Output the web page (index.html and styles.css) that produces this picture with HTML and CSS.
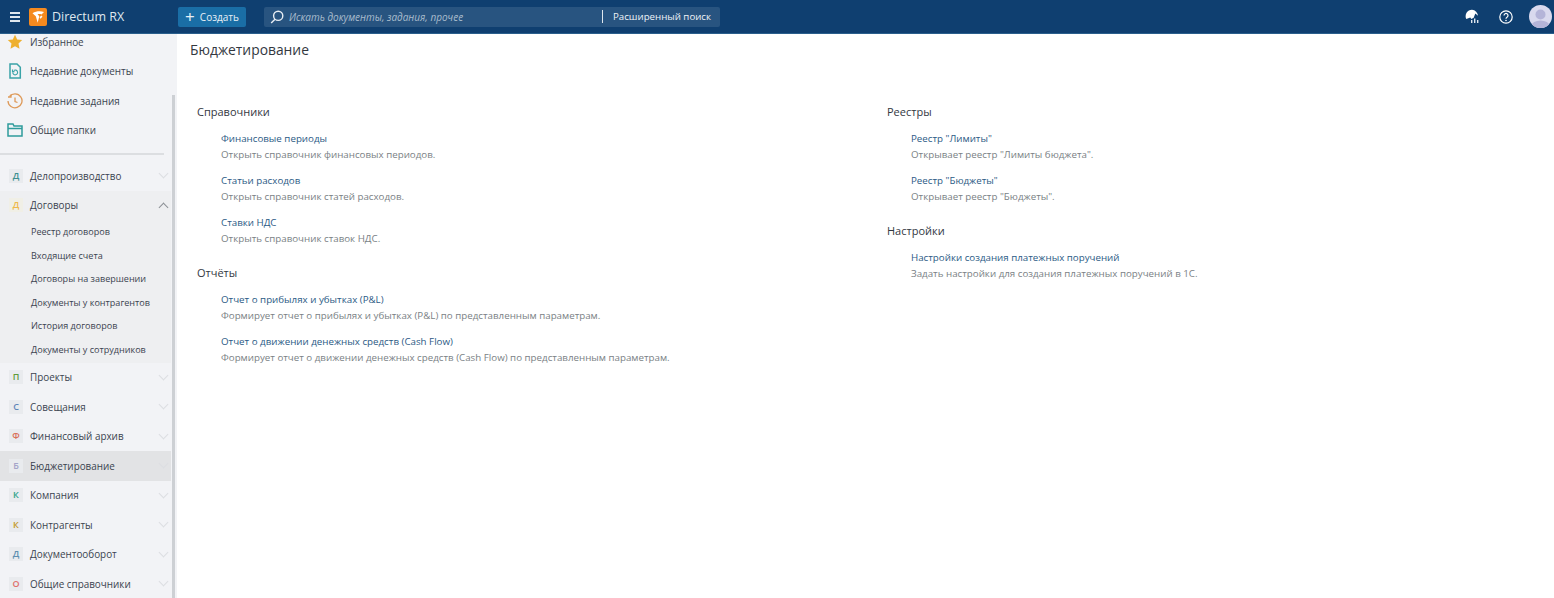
FILE: index.html
```html
<!DOCTYPE html>
<html lang="en">
<head>
  <meta charset="UTF-8" />
  <title>Directum RX</title>
  <link rel="stylesheet" href="styles.css">
</head>
<body>
  <header class="topbar">
    <div class="burger"><span></span><span></span><span></span></div>
    <svg class="logo" width="18" height="18" viewBox="0 0 18 18">
      <rect width="18" height="18" rx="2" fill="#f58a1f"/>
      <path d="M3.500 5.200C7 3.200 11.200 2.800 15 4l-2.500 2.400c-1.300-.5-2.700-.5-4-.1l1.800 2L8.700 14.800 6.800 8.300z" fill="#fff"/>
      <path d="M10.500 9.800c.4-1 1-1.700 1.900-2.200l1.100 1.100c-.8.500-1.400 1.200-1.800 2.100z" fill="#fff"/>
    </svg>
    <div class="brand">Directum RX</div>
    <button class="create"><span class="plus">+</span>Создать</button>
    <div class="search">
      <svg width="14" height="14" viewBox="0 0 14 14" fill="none" stroke="#e8eef4" stroke-width="1.4">
        <circle cx="8.2" cy="5.8" r="4.6"/><path d="M5 9.2 1.2 13"/>
      </svg>
      <span class="search-text">Искать документы, задания, прочее</span>
      <span class="search-more">Расширенный поиск</span>
    </div>
    <div class="topbar-right">
      <svg width="15" height="15" viewBox="0 0 15 15">
        <path d="M7 .8a6.400 6.400 0 0 0-5.700 9.300l4-1.600 1 1.500 2.400-1.200 1.600-4.200 2.700 2.200A6.400 6.400 0 0 0 7 .8z" fill="#fff"/>
        <path d="M6 14v-3h1.400v3zM9 14V9.500h1.400V14zM12 14v-3h1.400v3z" fill="#dfe7ee"/>
      </svg>
      <svg class="help" width="14" height="14" viewBox="0 0 14 14" fill="none">
        <circle cx="7" cy="7" r="6.200" stroke="#fff" stroke-width="1.200"/>
        <path d="M5 5.400a2 2 0 1 1 3 1.800c-.7.4-1 .8-1 1.500" stroke="#fff" stroke-width="1.200"/>
        <circle cx="7" cy="10.500" r=".8" fill="#fff"/>
      </svg>
      <svg class="avatar" width="23" height="23" viewBox="0 0 23 23">
        <defs><clipPath id="round"><circle cx="11.500" cy="11.500" r="11.500"/></clipPath></defs>
        <g clip-path="url(#round)">
          <rect width="23" height="23" fill="#d9d9ee"/>
          <circle cx="11.500" cy="9.500" r="5" fill="#b4b4d8"/>
          <ellipse cx="11.500" cy="21" rx="9" ry="5.500" fill="#b4b4d8"/>
        </g>
      </svg>
    </div>
  </header>

  <div class="main">
    <nav class="sidebar">
      <div class="scroll-thumb"></div>
      <div class="nav-top">
        <a class="nav-row">
          <svg class="nav-icon" width="16" height="16" viewBox="0 0 16 16"><path d="M8 .8l2.200 4.700 5 .6-3.700 3.500 1 5.100L8 12.200l-4.500 2.500 1-5.100L.8 6.100l5-.6z" fill="#eeb02f"/></svg>
          <span>Избранное</span>
        </a>
        <a class="nav-row">
          <svg class="nav-icon" width="16" height="16" viewBox="0 0 16 16" fill="none" stroke="#3aa3a8" stroke-width="1.500"><path d="M3 1h7l3.300 3.300V15H3z"/><path d="M5.800 9.500a2.400 2.400 0 1 0 1-2M5.500 6.600v2h2" stroke-width="1.100"/></svg>
          <span>Недавние документы</span>
        </a>
        <a class="nav-row">
          <svg class="nav-icon" width="16" height="16" viewBox="0 0 16 16" fill="none" stroke="#de9a5a" stroke-width="1.300"><path d="M2.500 3.500A7 7 0 1 1 1 8"/><path d="M1 4h3V1.500M8 4.500V8.500l2.500 1"/></svg>
          <span>Недавние задания</span>
        </a>
        <a class="nav-row">
          <svg class="nav-icon" width="16" height="14" viewBox="0 0 16 14" fill="none" stroke="#2f9c9c" stroke-width="1.500"><path d="M1 1h5l1 2h8v10H1z"/><path d="M1 5.500h14"/></svg>
          <span>Общие папки</span>
        </a>
      </div>
      <div class="nav-divider"></div>
      <a class="nav-row"><i class="letter c-teal">Д</i><span>Делопроизводство</span><b class="chev"></b></a>
      <div class="nav-group">
        <a class="nav-row"><i class="letter c-yellow">Д</i><span>Договоры</span><b class="chev up"></b></a>
        <a class="nav-sub">Реестр договоров</a>
        <a class="nav-sub">Входящие счета</a>
        <a class="nav-sub">Договоры на завершении</a>
        <a class="nav-sub">Документы у контрагентов</a>
        <a class="nav-sub">История договоров</a>
        <a class="nav-sub">Документы у сотрудников</a>
      </div>
      <a class="nav-row"><i class="letter c-green">П</i><span>Проекты</span><b class="chev"></b></a>
      <a class="nav-row"><i class="letter c-blue">С</i><span>Совещания</span><b class="chev"></b></a>
      <a class="nav-row"><i class="letter c-red">Ф</i><span>Финансовый архив</span><b class="chev"></b></a>
      <a class="nav-row active"><i class="letter c-lilac">Б</i><span>Бюджетирование</span><b class="chev"></b></a>
      <a class="nav-row"><i class="letter c-emerald">К</i><span>Компания</span><b class="chev"></b></a>
      <a class="nav-row"><i class="letter c-amber">К</i><span>Контрагенты</span><b class="chev"></b></a>
      <a class="nav-row"><i class="letter c-steel">Д</i><span>Документооборот</span><b class="chev"></b></a>
      <a class="nav-row"><i class="letter c-coral">О</i><span>Общие справочники</span><b class="chev"></b></a>
    </nav>

    <section class="content">
      <h1>Бюджетирование</h1>
      <div class="columns">
        <div class="column">
          <h2>Справочники</h2>
          <div class="entry"><a>Финансовые периоды</a><p>Открыть справочник финансовых периодов.</p></div>
          <div class="entry"><a>Статьи расходов</a><p>Открыть справочник статей расходов.</p></div>
          <div class="entry"><a>Ставки НДС</a><p>Открыть справочник ставок НДС.</p></div>
          <h2>Отчёты</h2>
          <div class="entry"><a>Отчет о прибылях и убытках (P&amp;L)</a><p>Формирует отчет о прибылях и убытках (P&amp;L) по представленным параметрам.</p></div>
          <div class="entry"><a>Отчет о движении денежных средств (Cash Flow)</a><p>Формирует отчет о движении денежных средств (Cash Flow) по представленным параметрам.</p></div>
        </div>
        <div class="column">
          <h2>Реестры</h2>
          <div class="entry"><a>Реестр "Лимиты"</a><p>Открывает реестр "Лимиты бюджета".</p></div>
          <div class="entry"><a>Реестр "Бюджеты"</a><p>Открывает реестр "Бюджеты".</p></div>
          <h2>Настройки</h2>
          <div class="entry"><a>Настройки создания платежных поручений</a><p>Задать настройки для создания платежных поручений в 1С.</p></div>
        </div>
      </div>
    </section>
  </div>
</body>
</html>
```

FILE: styles.css
```css
* {
  box-sizing: border-box;
}
html, body {
  height: 100%;
}
body {
  margin: 0;
  overflow: hidden;
  font-family: "Open Sans", "Noto Sans", sans-serif;
  font-size: 10px;
  color: #3b4350;
  background: white;
}
.topbar {
  height: 34px;
  display: flex;
  align-items: center;
  background: #0f3f70;
  border-bottom: 1px solid #2a5f8c;
  color: white;
}
.burger {
  width: 10px;
  margin-left: 10px;
  display: flex;
  flex-direction: column;
  gap: 2px;
}
.burger span {
  height: 2px;
  background: #dfe7ee;
}
.logo {
  margin-left: 9px;
}
.brand {
  margin-left: 5px;
  width: 126px;
  font-size: 12.5px;
  color: #dfe7ee;
}
.create {
  width: 68px;
  height: 20px;
  padding: 0;
  display: flex;
  align-items: center;
  justify-content: center;
  gap: 5px;
  border: none;
  border-radius: 2px;
  background: #1a6ea6;
  color: #e8f0f6;
  font-family: inherit;
  font-size: 10px;
}
.plus {
  font-size: 17px;
  line-height: 16px;
}
.search {
  margin-left: 18px;
  width: 456px;
  height: 20px;
  display: flex;
  align-items: center;
  padding-left: 6px;
  border-radius: 2px;
  background: #285480;
}
.search-text {
  flex: 1;
  margin-left: 5px;
  font-style: italic;
  color: #a9bccd;
}
.search-more {
  width: 118px;
  padding-left: 10px;
  border-left: 1px solid #dfe7ee;
  color: #eef3f7;
  font-size: 9.7px;
  line-height: 13px;
}
.topbar-right {
  margin-left: auto;
  margin-right: 2px;
  display: flex;
  align-items: center;
}
.help {
  margin-left: 19px;
}
.avatar {
  margin-left: 16px;
}
.main {
  height: 564px;
  display: flex;
}
.sidebar {
  position: relative;
  flex: none;
  width: 177px;
  height: 564px;
  overflow: hidden;
  background: #f2f3f6;
  padding-right: 6px;
}
.scroll-thumb {
  position: absolute;
  top: 61px;
  bottom: 0;
  right: 2px;
  width: 3px;
  background: #cdd0d4;
}
.nav-top {
  margin-top: -7px;
}
.nav-row {
  height: 29.5px;
  display: flex;
  align-items: center;
  color: #3b4350;
  font-size: 9.9px;
}
.nav-row > span {
  flex: 1;
  margin-left: 30px;
}
.nav-icon {
  flex: none;
  margin-left: 7px;
  margin-right: -23px;
}
.nav-divider {
  height: 2px;
  margin: 8px 7px 6px 0;
  background: #dcdee1;
}
.letter {
  flex: none;
  width: 14px;
  height: 14px;
  margin-left: 9px;
  margin-right: -23px;
  background: #e9ebee;
  font-style: normal;
  font-weight: 600;
  font-size: 9px;
  line-height: 14px;
  text-align: center;
}
.c-teal { color: #3c8f8f; }
.c-yellow { color: #eeb84a; background: #f0efe6; }
.c-green { color: #5d9a3a; }
.c-blue { color: #5f86b8; }
.c-red { color: #d9705a; }
.c-lilac { color: #a5a5c9; }
.c-emerald { color: #2fa38a; }
.c-amber { color: #c49a2a; }
.c-steel { color: #5f8fb0; }
.c-coral { color: #e0706a; }
.chev {
  flex: none;
  width: 7px;
  height: 7px;
  margin-right: 4px;
  margin-top: -4px;
  border-right: 1px solid #dcdee2;
  border-bottom: 1px solid #dcdee2;
  transform: rotate(45deg);
}
.chev.up {
  margin-top: 4px;
  border-color: #8d9196;
  transform: rotate(225deg);
}
.nav-group {
  height: 172px;
  background: #eeeff1;
}
.nav-sub {
  display: flex;
  align-items: center;
  height: 23.5px;
  padding-left: 31px;
  font-size: 9.05px;
}
.nav-row.active {
  background: #e2e3e5;
}
.content {
  flex: 1;
  min-width: 0;
  padding-left: 13px;
}
h1 {
  margin: 7px 0 0;
  font-size: 13.85px;
  line-height: 18px;
  font-weight: 400;
  color: #33383f;
}
.columns {
  margin-top: 45px;
  display: flex;
}
.column {
  flex: none;
  width: 690px;
  padding-left: 7px;
}
h2 {
  margin: 19px 0 12px;
  font-size: 11px;
  line-height: 15px;
  font-weight: 400;
  color: #33383f;
}
h2:first-child {
  margin-top: 0;
}
.entry {
  margin: 0 0 11px 24px;
  font-size: 9.75px;
  line-height: 15.5px;
}
.entry a {
  display: block;
  color: #2b5a85;
}
.entry p {
  margin: 0;
  color: #7a7f85;
}
```
